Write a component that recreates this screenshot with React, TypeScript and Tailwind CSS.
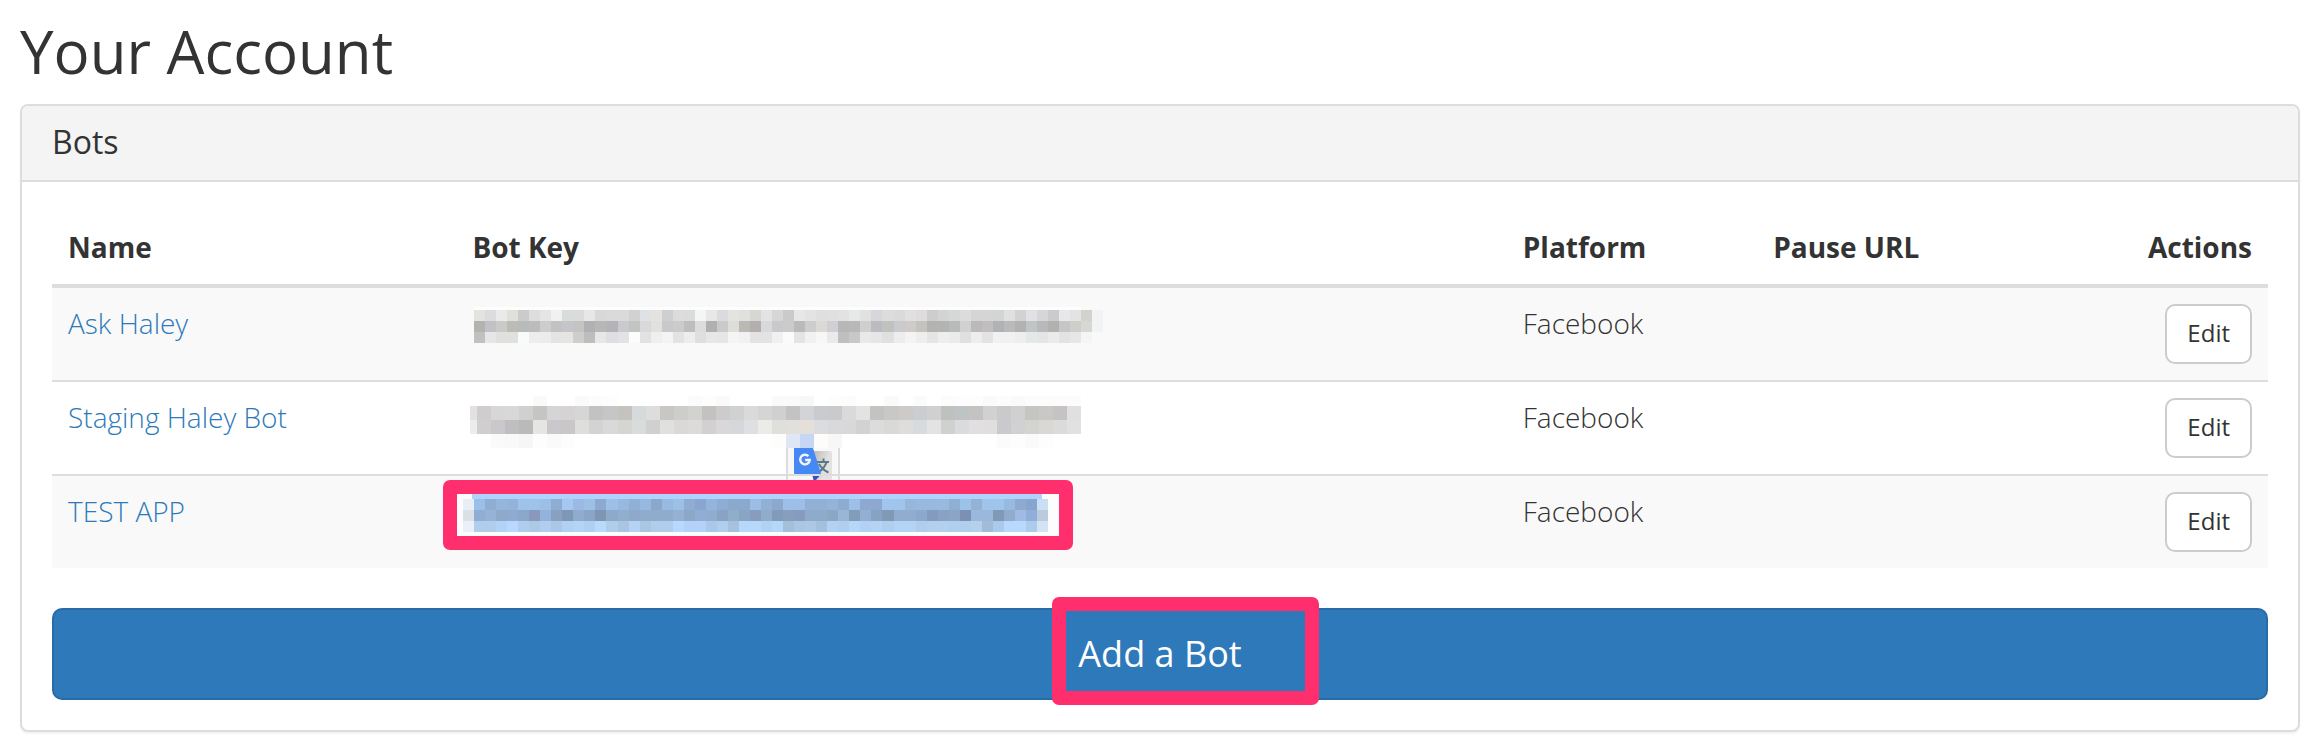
import React from "react";

type Strip = { x: number; y: number; w: number; h: number; colors: string };

// Each strip is one line of mosaic tiles; "-" leaves a gap.
const firstKey: Strip[] = [
  { x: 2, y: 3, w: 607, h: 3, colors: "fdfdfd" },
  { x: 2, y: 6, w: 11.04, h: 11, colors: "e3e3e0 dcdcde eaeaea e0e0da c9cccb dddde0 e5e5e5 f1f1f1 d8dcda dadcdb e7e7e7 d8d8d8 dadada dbd9da d0d2d1 dfe2e4 e5e3e0 cdcfd1 dcdcdc d9dcda f4f6f5 e7e7e7 dcdadc e3e3e0 e0e0dc d7d6d3 e3e3e3 d6d6d6 cacaca e7e7e7 e3e3e3 dfdfdf e0e0e2 e2e2e2 e6e8e9 e1e1e1 d6d7da dcdddb d8dbda e1e0e1 dfdcdd cecccd d3d3d3 d6d8d7 dbdddb d5d5d5 d5d5d5 d2d4d6 e0e0e0 d2d2d2 dfe1e4 d8d5d8 cbcbcd e8e8ea e3e3e3 d2d3ce f1f3f5" },
  { x: 2, y: 17, w: 11.04, h: 11, colors: "b3b3b0 c2c1c7 cacac8 bcbbb4 b8bbb9 bbbcbb cccdcd c2c2c4 c5c6c9 c4c4c4 b1b1b3 b7b7b7 b3b3b8 cacacc c2c4c2 d9d9dc e1e1de c9c9cc cbcbcc bcbfbe dcdcdc b0b0b0 cac9cc deddd8 bbb9b4 b2afad d8d9dc cac8cb cacbca bababa cdcdd0 dad9d6 d0d0d4 b7b7b7 b8b8b8 cfcfcf bdbbbf c0c2c0 cacace cecbc9 c4c3bf b3b3b2 b3b3b3 b9bbba d1d1d1 bababd c1bebf b0b2b4 bababd b1b2b1 c0c4c5 b9b8bd b1b1b0 c6c6c9 cececa d7d8d3 f1f3f5" },
  { x: 2, y: 28, w: 11.04, h: 11, colors: "c0c0c0 e6e6e7 e0e0df dfe1df f9fafa ededee ececec e4e4e4 e6e5e3 d0cecb bebebe e5e8e7 e0dee0 e2e2e7 fcfcfc e2e2e2 edf0ef f4f4f2 e3e3e3 ebeeed dfdfdf e7e7e7 e6e6e6 f5f5f5 f1f1f1 e3e3e3 e3e3e3 eef0f2 fbfbfb e4e4e2 f1f1f1 f7f7f7 eaeae8 bfbfbf c8c8c8 e9e9e9 e6e6e6 dfe0df ededed f4f4f4 eeeeec e5e5e5 eeeeee ebebeb e0e0e0 ededed e2e3e2 eff2f1 eff2f1 eeefed e4e8e7 e3e6e4 ebebeb e3e4e1 e5e8e6 f5f5f5" },
];

const secondKey: Strip[] = [
  { x: -2, y: 8, w: 7, h: 14, colors: "e5e1e1" },
  { x: -2, y: 22, w: 7, h: 14, colors: "ececec" },
  { x: 5, y: -2, w: 14.05, h: 10, colors: "- - - - fafafa - - fafafa fcfcfc fdfdfd - - - - - fbfbfb fdfdfd fafafa - - - fafafa fafafa f7f7f7 - fdfdfb fcfcfc - - f9fbfa - fbfbfb - fcfcfb fdfdfd fdfdfd fafafa fcfcfc fafafa fcfcfc fcfcfc fcfcfc fcfcfc" },
  { x: 5, y: 8, w: 14.05, h: 14, colors: "cfcdce d8d7d5 d8d8d9 d0d0d0 c5c5c3 d5d5d8 d5d3d4 d6d6d6 c2c2c2 c6c6c6 c4c3c0 d6dada dddddd c8c7c4 cdcdca d2d2cf c3c2c0 cecbcc d0d2d1 dadadb d5d5d3 d0d0d0 c3c3c3 d2d4d7 cacbce cacacc dadada e3e3e1 c3c3c2 c8c8c7 cdcac8 cccdd0 d0d0d0 bfc1bf bec4c6 c5c3c2 d1d1d1 cacacc d0d0d0 c5c5c2 c9c8c7 c5c3c4 e0e0e0" },
  { x: 5, y: 22, w: 14.05, h: 14, colors: "cfcfcf cac8ca c0bec0 bababa e5e5e3 cac8ca c9c7c7 dededc d3d3d3 d9d9d7 d5d5d2 d9dcda d0d0d0 e0e0de dad9d7 dcdbd9 d1d1d1 d9d7d9 d5d8db dedfe3 ebebe8 dfdfdc e1e0dc e4dfd9 dadcdf d9d9dc d8d8d8 d2d2d2 dcdcdc d9d9d8 dfdddb d8dbdd e3e3e3 d0d0d0 d9dbdd e1dfe1 dfdfdf cacace d1d1d3 d3d4cf d9d8d5 dbdbdb e1e1e1" },
  { x: 5, y: 36, w: 14.05, h: 14, colors: "- fafafa f9f9f9 f6f6f6 fdfdfd fafafa fdfdfd - - - - - - - - - - - - - - fdfdfb dfe7f6 c6d7f6 fdfcfa f7f7f7 - - - - - - - - - - - fbfbfb fdfdfd fafafa fdfdfd" },
];

const selectedKey: Strip[] = [
  { x: 0, y: 2, w: 570, h: 5, colors: "b0d3fc" },
  { x: -9, y: 7, w: 11, h: 11, colors: "e7eef6" },
  { x: -9, y: 18, w: 11, h: 11, colors: "dce0e5" },
  { x: -9, y: 29, w: 11, h: 11, colors: "e9f0f9" },
  { x: 2, y: 7, w: 11.04, h: 11, colors: "9abfe8 91add3 96b5db 95b3da 9fc2ea 9fc2ea 9dbfe6 8facd2 a4c8f1 9bb9e4 9dc0e7 8caad0 9dc0e8 98b9df 91b0d8 98b9df 8aa9ca 98b9e2 9dc0e6 8facd2 89a5d0 95b4dc 8facd4 8ba9cc 8ba9cc 9bbde6 92afd5 8ca8cf 9dbfe7 9dbfe7 92b0d6 92b0d6 94b3d8 8eabd0 9cc0e8 8da9cf 8da9cf a0c6ed a0c5ed 96b6dc 98b8e0 98b8e0 99bade 8fafd4 9dc2ea 92b2d6 9fc4ec a0c5ed 98badf 8eaad0 86a6d0 ccdef4" },
  { x: 2, y: 18, w: 11.04, h: 11, colors: "90aed3 96b2d4 8eaacb 8eaad1 8ba7ca 8999bb 94b3dc 88a0c2 8096b5 8faccf 8ba5c8 7f96b3 8eaacb 92aecf 8ea9cb 90accc 90accc 90accc 94b0d3 8aa8c8 92add3 90acd0 89a3c3 90aeca 89a5c5 869dbd 8faccd 839bbb 879fbd 869bbe 8fabcc 8fabcc 8ba7c6 98b6d6 829cb9 92afd4 88a2c4 8099b5 90accf 90accf 8ca8cd 849bc0 88a2c2 8aa5c5 7b90b2 99b8dc 99b8dc 8099b7 8fabcd 9fbbe3 90aed8 bccadd" },
  { x: 2, y: 29, w: 11.04, h: 11, colors: "b0ceec b0cdec b4d2f6 b8d8ff b0ceec accae8 b1cdf0 aac8e6 b1d0f2 b4d4f5 b0d0f2 b9daf9 b0cdea abc4e2 b4d3f5 a9c6e3 b0cdeb b0cdeb b8d8ff b4d2f7 b4d2f7 aac8e8 b0ceed a6c1de b8d8fb b8d8fb b2d2f4 b6d8f8 a4bfda abc6e2 aec7e3 a5bfdc b3d0f5 b0ceee b7d7f8 b3d1f5 b5d4f5 b0ceee b4d4f4 b4d4f4 b0ceec b3d1ef b3d1ef b0ceed b0ceed b3d1ed a2bcd6 abc9eb b8d8fc b8d8fc acccec d4e2f4" },
];

function Mosaic({ label, strips }: { label: string; strips: Strip[] }) {
  return (
    <svg
      role="img"
      aria-label={label}
      viewBox="0 0 624 44"
      shapeRendering="crispEdges"
      className="block h-11 w-[624px] overflow-visible"
    >
      {strips.map((s, r) =>
        s.colors.split(" ").map((c, i) =>
          c === "-" ? null : (
            <rect key={`${r}-${i}`} x={s.x + i * s.w} y={s.y} width={s.w} height={s.h} fill={`#${c}`} />
          ),
        ),
      )}
    </svg>
  );
}

function TranslateBadge() {
  return (
    <button
      type="button"
      aria-label="Translate"
      className="absolute top-[66px] left-[330px] h-9 w-[54px] border-x-2 border-[#dcdcdc] bg-[#f8f8f8]"
    >
      <svg viewBox="0 0 50 36" className="block h-9 w-[50px]" aria-hidden="true">
        <defs>
          <linearGradient id="sheet" x1="0" y1="0" x2="1" y2="0.4">
            <stop offset="0.3" stopColor="#c0c0c0" />
            <stop offset="0.8" stopColor="#e2e2e2" />
          </linearGradient>
        </defs>
        <path d="M20 3h22a2 2 0 0 1 2 2v31H27z" fill="url(#sheet)" />
        <path
          d="M28 14h13M35.500 10.500v3.500M38.500 14c-1 4.500-4.500 8-9 11M31 16c2 3.500 5 6.500 9.500 8.500"
          fill="none"
          stroke="#5b7a85"
          strokeWidth="2"
        />
        <path d="M24 26h9.500l-7.500 8z" fill="#3a4fc0" />
        <path d="M6 0h19l8.500 27H8a2 2 0 0 1-2-2z" fill="#4688f4" />
        <path d="M20.400 8.100a4.800 4.800 0 1 0 1.400 3.900h-4.600" fill="none" stroke="#f2f5fb" strokeWidth="2.400" />
      </svg>
    </button>
  );
}

const bots = [
  { name: "Ask Haley", platform: "Facebook", key: firstKey },
  { name: "Staging Haley Bot", platform: "Facebook", key: secondKey },
  { name: "TEST APP", platform: "Facebook", key: selectedKey },
];

export default function App() {
  return (
    <main className="bg-white pt-[15px] pr-4 pb-[10px] pl-5 font-['Open_Sans',sans-serif] text-[28px] leading-[38px] font-light text-[#333]">
      <h1 className="mb-[17px] text-[60px] leading-[72px] font-normal">Your Account</h1>

      <section className="rounded-lg border-2 border-[#ddd] bg-white shadow-[0_2px_2px_rgba(0,0,0,0.05)]">
        <header className="rounded-t-md border-b-2 border-[#ddd] bg-[#f4f4f4] px-[30px] pt-[18px] pb-5">
          <h2 className="text-[32px] leading-9 font-normal">Bots</h2>
        </header>

        <div className="p-[30px]">
          <table className="mb-10 w-full table-fixed border-separate border-spacing-0 text-left">
            <thead>
              <tr className="[&>th]:border-b-4 [&>th]:border-[#ddd] [&>th]:px-4 [&>th]:pt-4 [&>th]:pb-[18px] [&>th]:font-bold">
                <th className="w-[18.25%]">Name</th>
                <th className="w-[47.4%]">Bot Key</th>
                <th className="w-[11.3%]">Platform</th>
                <th>Pause URL</th>
                <th className="text-right">Actions</th>
              </tr>
            </thead>
            <tbody>
              {bots.map((bot, i) => (
                <tr
                  key={bot.name}
                  className="odd:bg-[#f9f9f9] [&:not(:first-child)>td]:border-t-2 [&>td]:border-[#ddd] [&>td]:p-4 [&>td]:align-top"
                >
                  <td>
                    <a href="#" className="text-[#2e79b9]">{bot.name}</a>
                  </td>
                  <td className="relative">
                    {i === 2 && (
                      <div className="absolute top-1 left-[-13px] h-[70px] w-[630px] rounded-[7px] border-[14px] border-[#ff2e6c] bg-[#fcfcfc]" />
                    )}
                    <div className="relative">
                      <Mosaic label={`${bot.name} key, hidden`} strips={bot.key} />
                    </div>
                    {i === 1 && <TranslateBadge />}
                  </td>
                  <td>{bot.platform}</td>
                  <td />
                  <td className="text-right">
                    <button
                      type="button"
                      className="ml-auto block rounded-[10px] border-2 border-[#ccc] bg-white px-5 pt-[9px] pb-[11px] text-[24px] leading-9 font-normal"
                    >
                      Edit
                    </button>
                  </td>
                </tr>
              ))}
            </tbody>
          </table>

          <div className="relative">
            <button
              type="button"
              className="block w-full rounded-[10px] border-2 border-[#296ba6] bg-[#2e79b9] px-8 py-5 text-[36px] leading-[48px] font-normal text-white"
            >
              Add a Bot
            </button>
            <div className="pointer-events-none absolute top-[-11px] left-1/2 ml-[-108px] h-[108px] w-[267px] rounded-[7px] border-[14px] border-[#ff2e6c]" />
          </div>
        </div>
      </section>
    </main>
  );
}
